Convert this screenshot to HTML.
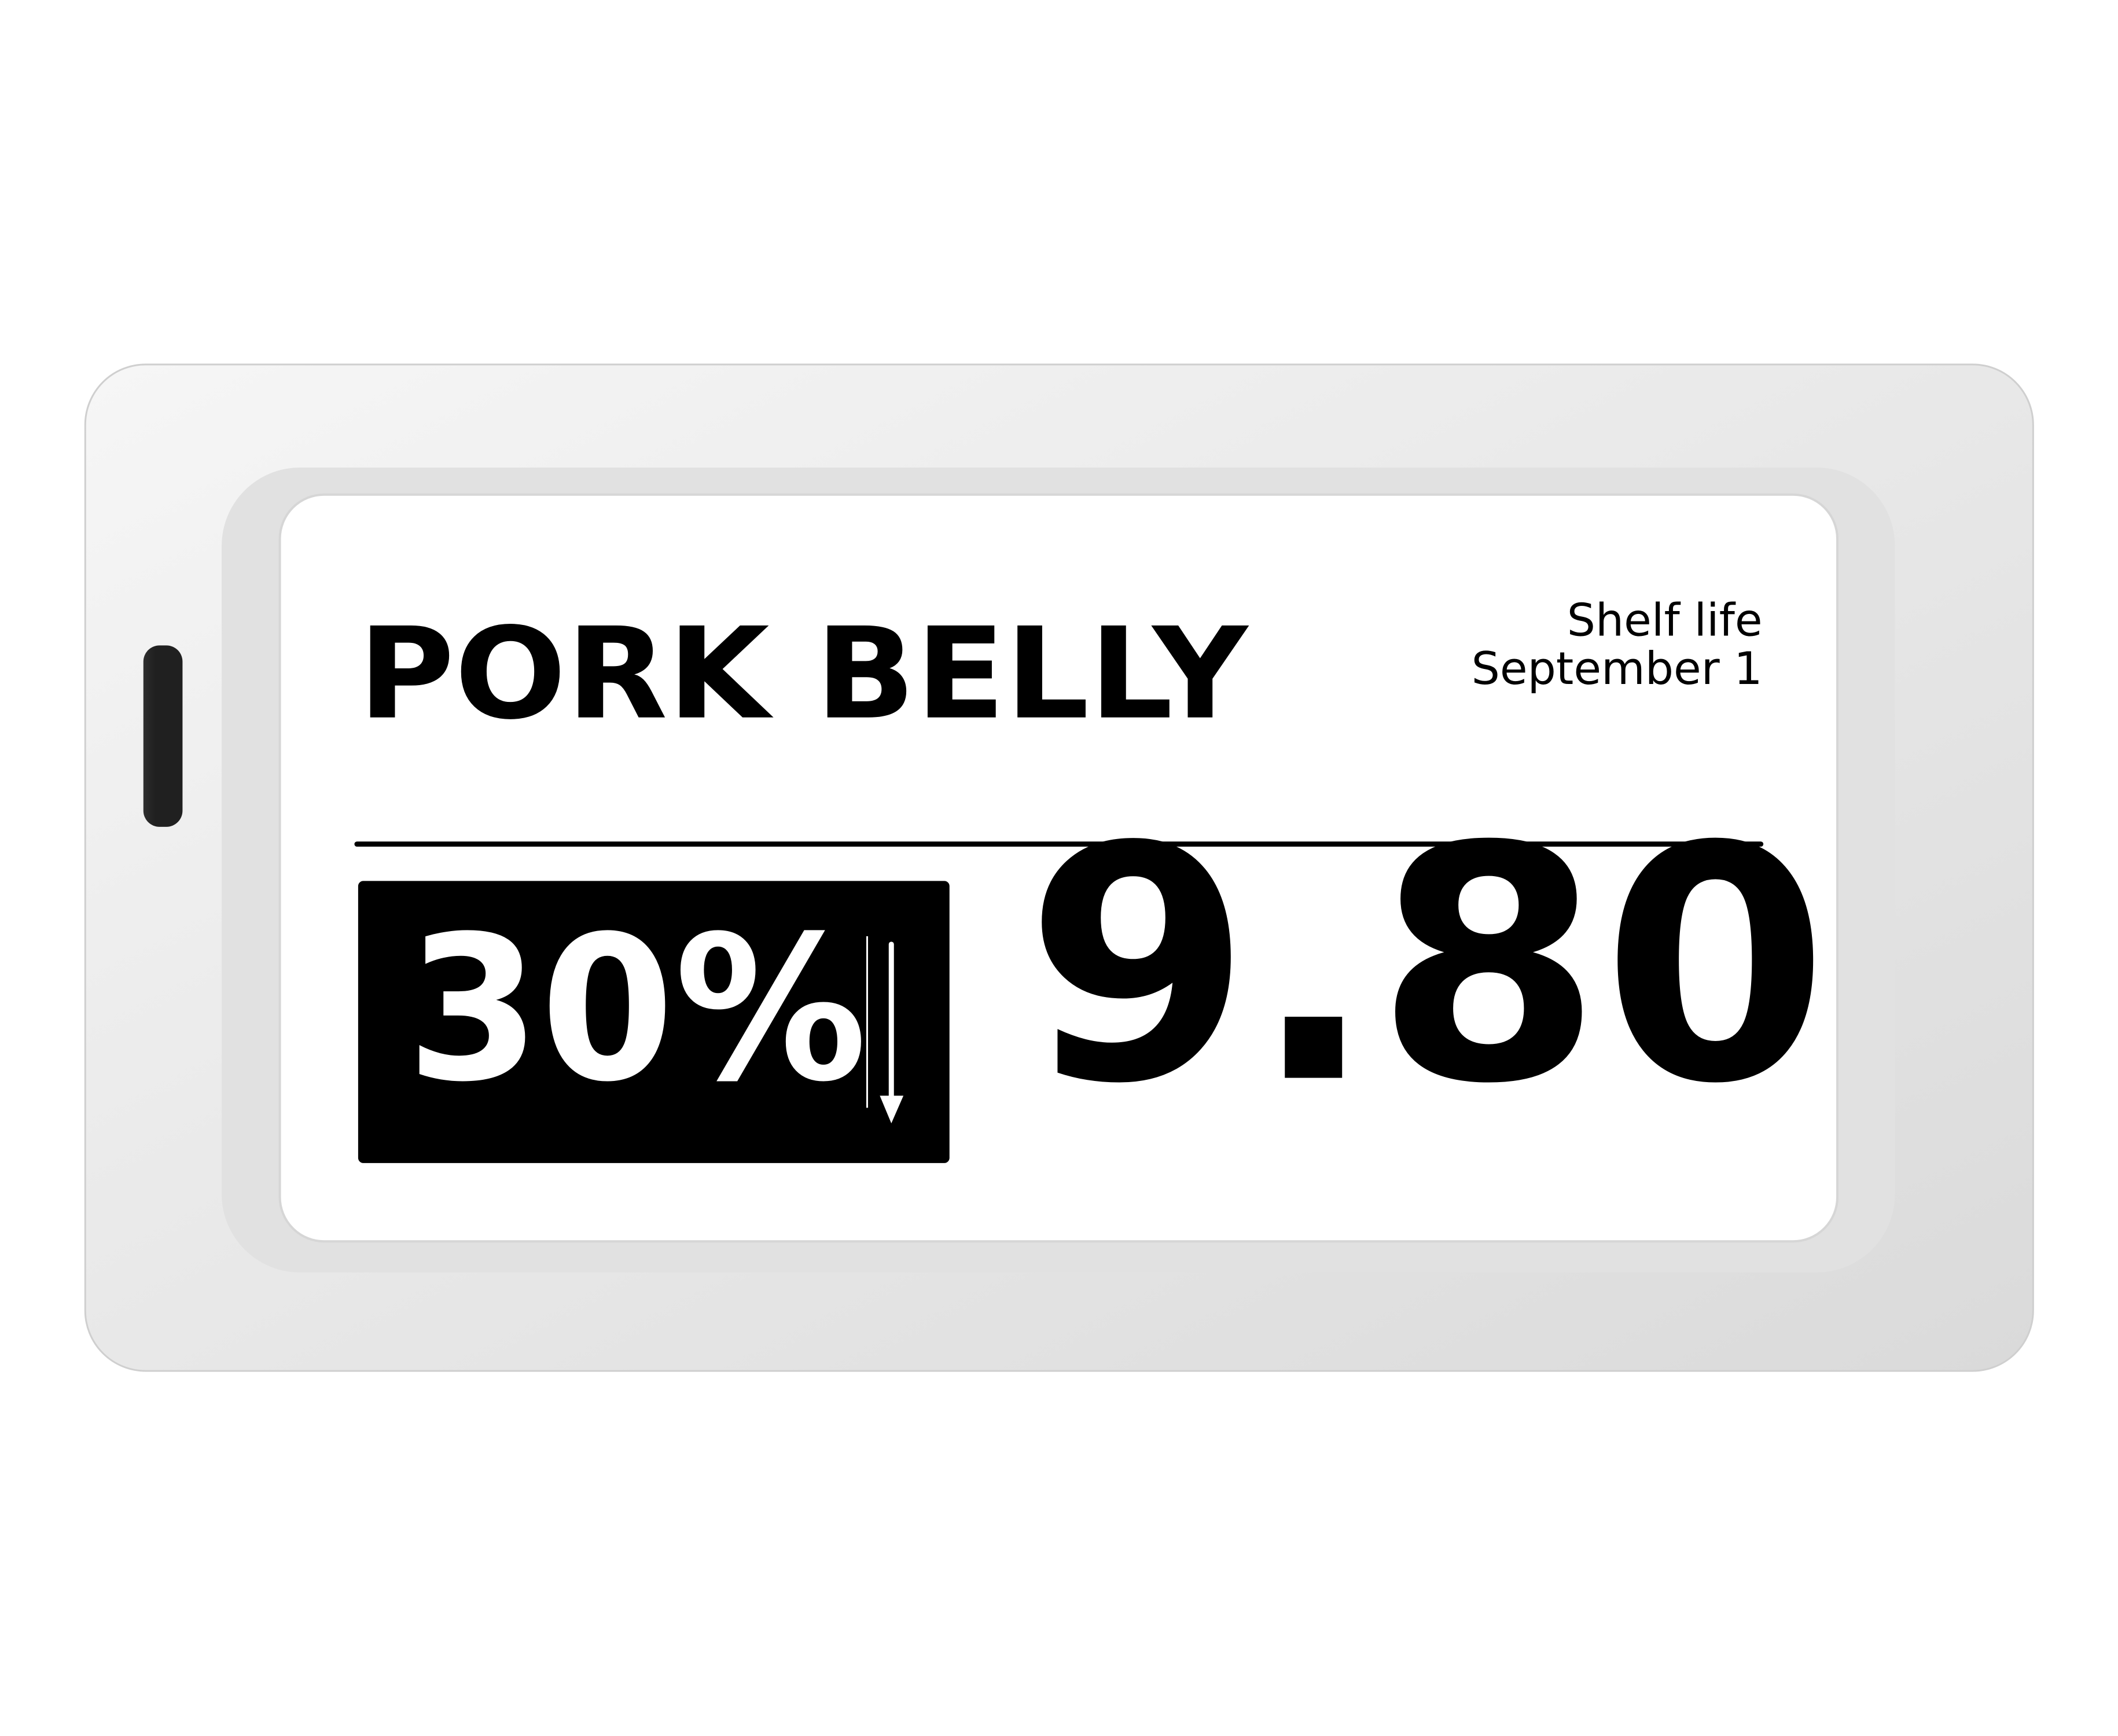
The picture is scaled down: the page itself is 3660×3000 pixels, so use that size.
<!DOCTYPE html>
<html><head><meta charset="utf-8"><style>
html,body{margin:0;padding:0;background:#fff;}
svg{display:block;}
</style></head><body>
<svg width="3660" height="3000" viewBox="0 0 3660 3000" xmlns="http://www.w3.org/2000/svg">
<defs>
<linearGradient id="g" x1="0" y1="0" x2="1" y2="1">
<stop offset="0" stop-color="#f6f6f6"/>
<stop offset="1" stop-color="#dadada"/>
</linearGradient>
<linearGradient id="s" x1="0" y1="0" x2="1" y2="0">
<stop offset="0" stop-color="#2e2e2e"/>
<stop offset="0.3" stop-color="#202020"/>
<stop offset="1" stop-color="#202020"/>
</linearGradient>
</defs>
<g transform="scale(0.995)">
<rect x="148" y="633" width="3383" height="1748" rx="105" fill="url(#g)" stroke="#cfcfcf" stroke-width="3"/>
<rect x="385" y="812" width="2906" height="1398" rx="136" fill="#e1e1e1"/>
<rect x="486" y="859" width="2705" height="1297" rx="77" fill="#fff" stroke="#d6d6d6" stroke-width="4"/>
<rect x="249" y="1121" width="68" height="315" rx="28" fill="url(#s)"/>
<text x="622" y="1246" font-family="DejaVu Sans, Liberation Sans, sans-serif" font-weight="bold" font-size="219" textLength="1545" lengthAdjust="spacingAndGlyphs" fill="#000">PORK BELLY</text>
<text x="3061" y="1104" text-anchor="end" font-family="DejaVu Sans, Liberation Sans, sans-serif" font-size="78" fill="#000">Shelf life</text>
<text x="3061" y="1188" text-anchor="end" font-family="DejaVu Sans, Liberation Sans, sans-serif" font-size="78" fill="#000">September 1</text>
<line x1="620" y1="1466" x2="3058" y2="1466" stroke="#000" stroke-width="9" stroke-linecap="round"/>
<rect x="622" y="1530" width="1027" height="490" rx="9" fill="#000"/>
<text x="706" y="1873" font-family="DejaVu Sans, Liberation Sans, sans-serif" font-weight="bold" font-size="347" textLength="800" lengthAdjust="spacingAndGlyphs" fill="#fff">30%</text>
<line x1="1506" y1="1626" x2="1506" y2="1924" stroke="#fff" stroke-width="3"/>
<line x1="1548" y1="1640" x2="1548" y2="1905" stroke="#fff" stroke-width="9" stroke-linecap="round"/>
<polygon points="1528,1903 1569,1903 1548,1951" fill="#fff"/>
<text x="1780" y="1872" font-family="DejaVu Sans, Liberation Sans, sans-serif" font-weight="bold" font-size="562" textLength="1396" lengthAdjust="spacingAndGlyphs" fill="#000">9.80</text>
</g>
</svg>
</body></html>
